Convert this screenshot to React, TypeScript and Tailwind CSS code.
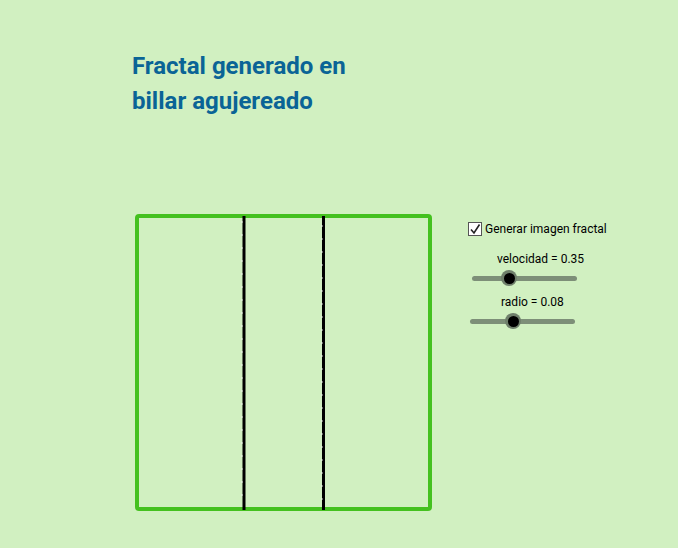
import React from "react";

function Slider({ label, knob, labelOffset }: { label: string; knob: number; labelOffset: number }) {
  return (
    <div className="flex flex-col w-[105px]">
      <span className="text-[12px] leading-[14px] text-black whitespace-nowrap" style={{ marginLeft: labelOffset }}>
        {label}
      </span>
      <div className="relative mt-[4px] h-[16px] w-[105px]">
        <div className="absolute left-0 right-0 top-[6px] h-[5px] rounded-full bg-[#7d8f78]" />
        <div
          className="absolute top-0 h-[16px] w-[16px] -translate-x-1/2 rounded-full bg-[#6f7f6b] flex items-center justify-center"
          style={{ left: knob }}
        >
          <div className="h-[11px] w-[11px] rounded-full bg-black" />
        </div>
      </div>
    </div>
  );
}

function Board() {
  const ticks = Array.from({ length: 22 }, (_, i) => 222 + i * 13);
  return (
    <svg width="300" height="300" viewBox="0 0 300 300" className="block">
      <rect x="3" y="2" width="293" height="293" rx="2" fill="none" stroke="#44c11f" strokeWidth="4" />
      <line x1="110" y1="2" x2="110" y2="296" stroke="#000" strokeWidth="3" />
      <line x1="189.5" y1="2" x2="189.5" y2="296" stroke="#000" strokeWidth="3" />
      {ticks.map((y, i) => (
        <g key={i} stroke="#ffffff" strokeWidth="1" opacity="0.8">
          <line x1="107" y1={y - 214} x2="109" y2={y - 214} />
          <line x1="187" y1={y - 210} x2="189" y2={y - 210} />
        </g>
      ))}
    </svg>
  );
}

export default function App() {
  return (
    <div className="w-[678px] h-[548px] bg-[#d1f0c1] overflow-hidden" style={{ fontFamily: "Roboto, 'Liberation Sans', sans-serif" }}>
      <div className="pl-[132px] pt-[49px]">
        <h1 className="text-[24px] leading-[35px] font-bold text-[#0a6496]">
          Fractal generado en
          <br />
          billar agujereado
        </h1>
      </div>
      <div className="flex mt-[95px] pl-[134px]">
        <Board />
        <div className="ml-[34px] pt-[8px] flex flex-col items-start">
          <label className="flex items-center gap-[3px] text-[12px] leading-[14px] text-black">
            <span className="h-[14px] w-[14px] border border-[#555] bg-white flex items-center justify-center">
              <svg width="12" height="12" viewBox="0 0 12 12">
                <path d="M2 6.5 L5 10 L10.5 1.5" fill="none" stroke="#222" strokeWidth="1.6" />
              </svg>
            </span>
            Generar imagen fractal
          </label>
          <div className="mt-[16px] ml-[4px]">
            <Slider label="velocidad = 0.35" knob={37} labelOffset={25} />
          </div>
          <div className="mt-[9px] ml-[2px]">
            <Slider label="radio = 0.08" knob={43} labelOffset={31} />
          </div>
        </div>
      </div>
    </div>
  );
}
